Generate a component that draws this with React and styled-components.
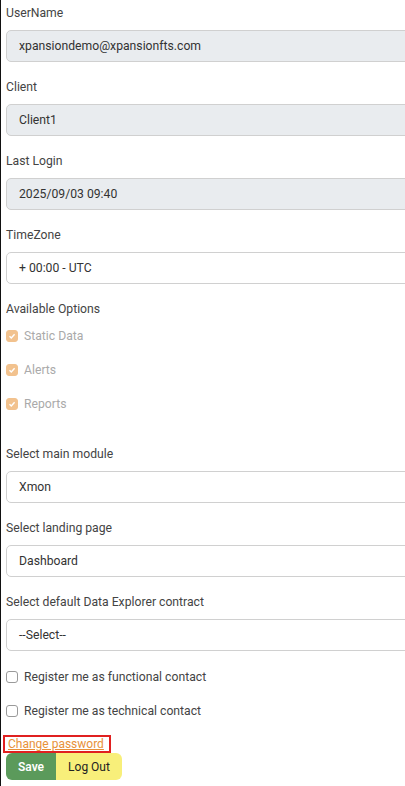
import styled, { createGlobalStyle } from 'styled-components';

const GlobalStyle = createGlobalStyle`
  html, body {
    margin: 0;
    padding: 0;
    background: #fff;
    overflow: hidden;
  }
  body {
    font-family: Roboto, "Liberation Sans", Arial, sans-serif;
  }
`

const Page = styled.div`
  min-height: 786px;
  border-left: 1px solid #111;
  padding: 0 0 0 5px;
  box-sizing: border-box;
  overflow: hidden;
`

const Group = styled.div`
  padding-top: 4px;
  margin-bottom: ${p => p.$gap ?? 12}px;
`

const Label = styled.div`
  font-size: 12.2px;
  line-height: 18px;
  color: #444;
  margin-bottom: 8px;
`

const Field = styled.div`
  width: 420px;
  height: 32px;
  box-sizing: border-box;
  border: 1px solid #d0d0d0;
  border-radius: 5px;
  background: ${p => (p.$disabled ? '#e9ecef' : '#fff')};
  padding-left: 12px;
  display: flex;
  align-items: center;
  font-size: 12.2px;
  color: #333;
`

const OptionRow = styled.label`
  display: flex;
  align-items: center;
  gap: 6px;
  height: 34px;
  font-size: 12.2px;
  color: ${p => (p.$muted ? '#aaa' : '#444')};
`

const Box = styled.span`
  width: 12px;
  height: 12px;
  box-sizing: border-box;
  border-radius: 3px;
  display: inline-flex;
  align-items: center;
  justify-content: center;
  background: ${p => (p.$checked ? '#f2c28e' : '#fff')};
  border: 1px solid ${p => (p.$checked ? '#f2c28e' : '#9a9a9a')};
`

const Options = styled.div`
  margin: -7px 0 20px;
`

const Contacts = styled.div`
  margin-top: -3px;
`

const PasswordLink = styled.a`
  display: inline-block;
  margin: 7px 0 0 -3px;
  padding: 0 5px 0 3px;
  border: 2px solid #e02020;
  font-size: 12px;
  line-height: 14px;
  color: #e8913a;
  text-decoration: underline;
  cursor: pointer;
`

const Buttons = styled.div`
  display: flex;
`

const Button = styled.button`
  border: none;
  height: 27px;
  padding: 0 12px;
  font-family: inherit;
  font-size: 12px;
  font-weight: ${p => (p.$variant === 'save' ? 600 : 400)};
  color: ${p => (p.$variant === 'save' ? '#fff' : '#222')};
  background: ${p => (p.$variant === 'save' ? '#5b9a5b' : '#f8ef7a')};
  border-radius: ${p => (p.$variant === 'save' ? '6px 0 0 6px' : '0 6px 6px 0')};
`

const Check = ({ checked }) => (
  <Box $checked={checked}>
    {checked && (
      <svg width="8" height="8" viewBox="0 0 8 8">
        <path d="M1.5 4.2 L3.3 6 L6.6 2.2" fill="none" stroke="#fff" strokeWidth="1.4" />
      </svg>
    )}
  </Box>
)

const fields = [
  { label: 'UserName', value: 'xpansiondemo@xpansionfts.com', disabled: true },
  { label: 'Client', value: 'Client1', disabled: true },
  { label: 'Last Login', value: '2025/09/03 09:40', disabled: true },
  { label: 'TimeZone', value: '+ 00:00 - UTC' },
]

const selects = [
  { label: 'Select main module', value: 'Xmon' },
  { label: 'Select landing page', value: 'Dashboard' },
  { label: 'Select default Data Explorer contract', value: '--Select--' },
]

export default function App() {
  return (
    <Page>
      <GlobalStyle />
      {fields.map(f => (
        <Group key={f.label}>
          <Label>{f.label}</Label>
          <Field $disabled={f.disabled}>{f.value}</Field>
        </Group>
      ))}
      <Group $gap={0}>
        <Label>Available Options</Label>
      </Group>
      <Options>
        {['Static Data', 'Alerts', 'Reports'].map(o => (
          <OptionRow key={o} $muted>
            <Check checked />
            {o}
          </OptionRow>
        ))}
      </Options>
      {selects.map(s => (
        <Group key={s.label}>
          <Label>{s.label}</Label>
          <Field>{s.value}</Field>
        </Group>
      ))}
      <Contacts>
        <OptionRow>
          <Check />
          Register me as functional contact
        </OptionRow>
        <OptionRow>
          <Check />
          Register me as technical contact
        </OptionRow>
      </Contacts>
      <PasswordLink>Change password</PasswordLink>
      <Buttons>
        <Button $variant="save">Save</Button>
        <Button>Log Out</Button>
      </Buttons>
    </Page>
  )
}
